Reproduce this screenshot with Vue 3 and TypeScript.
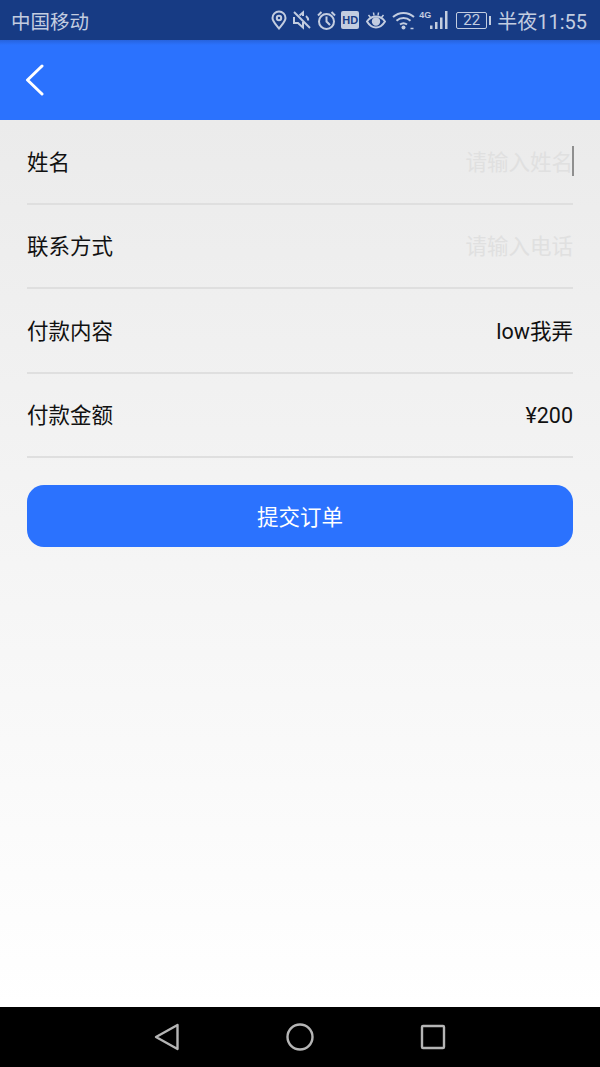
<template>
  <div class="phone">
    <div class="status-bar">
      <span class="carrier">中国移动</span>
      <div class="status-right">
        <!-- location -->
        <svg class="ic" width="16" height="20" viewBox="0 0 16 20" fill="none" stroke="#c3cde0" stroke-width="2">
          <path d="M8 18.500C5 14.500 1.500 11.500 1.500 8a6.500 6.500 0 0 1 13 0c0 3.500-3.500 6.500-6.500 10.500z" />
          <circle cx="8" cy="8" r="2.200" />
        </svg>
        <!-- muted -->
        <svg class="ic" width="18" height="20" viewBox="0 0 18 20" fill="none" stroke="#c3cde0" stroke-width="2">
          <path d="M1 7v6h4l5 4.500V12M10 6V2.500L6.500 5.500" />
          <path d="M1 2l16 16" />
          <path d="M13 6c1.500 1.200 2.200 2.800 2.200 4.500" />
        </svg>
        <!-- alarm -->
        <svg class="ic alarm" width="19" height="20" viewBox="0 0 19 20" fill="none" stroke="#c3cde0" stroke-width="2">
          <circle cx="9.500" cy="11.500" r="7.500" />
          <path d="M9.500 6.500v5l3.500 3.500M1 5.500L4.500 2M18 5.500L14.500 2" />
        </svg>
        <span class="hd">HD</span>
        <!-- eye -->
        <svg class="ic" width="20" height="20" viewBox="0 0 20 20" fill="none" stroke="#c3cde0" stroke-width="2">
          <path d="M1 11.500c2.500-3.500 5.500-5 9-5s6.500 1.500 9 5c-2.500 4-5.500 6-9 6s-6.500-2-9-6z" />
          <circle cx="10" cy="11.500" r="3.200" fill="#c3cde0" />
          <path d="M2.500 5l2 2.500M7.500 2.500l.5 3M12.500 2.500l-.5 3M17.500 5l-2 2.500" stroke-width="1.500" />
        </svg>
        <!-- wifi -->
        <svg class="ic wifi" width="24" height="20" viewBox="0 0 24 20" fill="none" stroke="#c3cde0" stroke-width="2">
          <path d="M1 7c6-5.500 15-5.500 21 0M4.500 10.700c4-3.500 10-3.500 14 0M8 14.500c2-1.500 5-1.500 7 0" />
          <circle cx="11.500" cy="17.500" r="2" fill="#c3cde0" stroke="none" />
          <path d="M18.500 18.500h3" stroke-width="1.500" />
        </svg>
        <!-- signal -->
        <div class="signal">
          <span class="net">4G</span>
          <svg width="20" height="20" viewBox="0 0 20 20" fill="#c3cde0">
            <rect x="1" y="15.500" width="2.500" height="3.500" />
            <rect x="6" y="12" width="2.500" height="7" />
            <rect x="11" y="7.500" width="2.500" height="11.500" />
            <rect x="16" y="1" width="2.500" height="18" />
          </svg>
        </div>
        <!-- battery -->
        <div class="battery">
          <span class="battery-body">22</span>
          <span class="battery-tip"></span>
        </div>
        <span class="clock">半夜11:55</span>
      </div>
    </div>

    <header class="nav-bar">
      <svg width="20" height="32" viewBox="0 0 20 32" fill="none" stroke="#fff" stroke-width="3" stroke-linecap="round" stroke-linejoin="round">
        <path d="M17 2L2.500 16 17 30" />
      </svg>
    </header>

    <main class="content">
      <div v-for="row in rows" :key="row.label" class="row">
        <span class="label">{{ row.label }}</span>
        <span class="value" :class="{ placeholder: row.placeholder, focused: row.focused }">{{ row.value }}</span>
      </div>
      <button class="submit">提交订单</button>
    </main>

    <footer class="system-nav">
      <svg width="26" height="30" viewBox="0 0 26 30" fill="none" stroke="#b5b5b5" stroke-width="2.400" stroke-linejoin="round">
        <path d="M23.500 3L2 15l21.500 12z" />
      </svg>
      <svg width="28" height="28" viewBox="0 0 28 28" fill="none" stroke="#b5b5b5" stroke-width="2.400">
        <circle cx="14" cy="14" r="12.500" />
      </svg>
      <svg width="26" height="26" viewBox="0 0 26 26" fill="none" stroke="#b5b5b5" stroke-width="2.400" stroke-linejoin="round">
        <rect x="2" y="2" width="22" height="22" rx="1" />
      </svg>
    </footer>
  </div>
</template>

<script setup lang="ts">
interface Row {
  label: string;
  value: string;
  placeholder?: boolean;
  focused?: boolean;
}

const rows: Row[] = [
  { label: "姓名", value: "请输入姓名", placeholder: true, focused: true },
  { label: "联系方式", value: "请输入电话", placeholder: true },
  { label: "付款内容", value: "low我弄" },
  { label: "付款金额", value: "¥200" },
];
</script>

<style>
body {
  background: #000;
}
</style>

<style scoped>
.phone {
  width: 600px;
  height: 1067px;
  display: flex;
  flex-direction: column;
  overflow: hidden;
  font-family: Roboto, "Noto Sans CJK SC", sans-serif;
}
.status-bar {
  height: 40px;
  flex: none;
  display: flex;
  align-items: center;
  justify-content: space-between;
  padding: 0 13px 0 11px;
  box-sizing: border-box;
  background: #173b84;
  color: #c3cde0;
  font-size: 20px;
}
.carrier {
  font-size: 19.500px;
}
.status-right {
  display: flex;
  align-items: center;
}
.ic {
  margin-right: 6px;
}
.alarm {
  margin-right: 5px;
}
.wifi {
  margin-right: 3px;
}
.hd {
  width: 18px;
  height: 18px;
  margin-right: 7px;
  border-radius: 2px;
  background: #c3cde0;
  color: #173b84;
  font: 700 11px/18px "Liberation Sans", sans-serif;
  text-align: center;
}
.signal {
  position: relative;
  width: 30px;
  height: 20px;
  display: flex;
  justify-content: flex-end;
}
.net {
  position: absolute;
  left: 0;
  top: 0;
  font: 700 9px/10px "Liberation Sans", sans-serif;
}
.battery {
  display: flex;
  align-items: center;
  margin: 0 6px 0 7px;
}
.battery-body {
  width: 29px;
  height: 15px;
  border: 1px solid #c3cde0;
  border-radius: 2px;
  font-size: 15px;
  line-height: 15px;
  text-align: center;
}
.battery-tip {
  width: 2px;
  height: 9px;
  margin-left: 2px;
  background: #c3cde0;
}
.clock {
  white-space: nowrap;
}
.nav-bar {
  height: 80px;
  flex: none;
  display: flex;
  align-items: center;
  padding-left: 25px;
  box-sizing: border-box;
  background: linear-gradient(#2763dd 0, #2b72fe 5px);
}
.content {
  flex: 1;
  padding: 0 27px;
  background: linear-gradient(#ebebeb, #ffffff);
}
.row {
  height: 84.500px;
  display: flex;
  align-items: center;
  justify-content: space-between;
  box-sizing: border-box;
  padding-top: 3px;
  border-bottom: 2px solid #dfdfdf;
  color: #111;
  font-size: 21.500px;
  line-height: 30px;
}
.placeholder {
  color: #e0e0e0;
}
.focused {
  position: relative;
}
.focused::after {
  content: "";
  position: absolute;
  right: -1px;
  top: -2px;
  width: 2px;
  height: 30px;
  background: #8f8f8f;
}
.submit {
  display: block;
  width: 100%;
  height: 62px;
  margin-top: 27px;
  padding: 0 0 2px;
  border: 0;
  border-radius: 17px;
  background: #2b72fe;
  color: #fff;
  font-family: inherit;
  font-size: 21.500px;
}
.system-nav {
  height: 60px;
  flex: none;
  display: flex;
  align-items: center;
  justify-content: center;
  gap: 106px;
  background: #000;
}
</style>
